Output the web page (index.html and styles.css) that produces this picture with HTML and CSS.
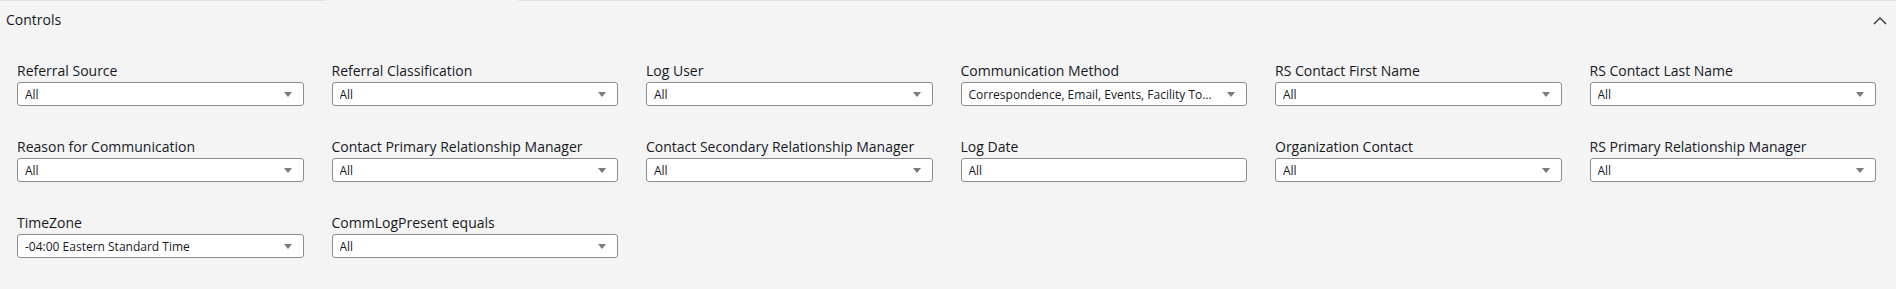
FILE: index.html
```html
<!DOCTYPE html>
<html>
<head>
<meta charset="utf-8">
<link rel="stylesheet" href="styles.css">
</head>
<body>
<div class="panel">
  <div class="topline"><span class="seg seg-a"></span><span class="seg-gap"></span><span class="seg seg-b"></span></div>
  <div class="header">
    <span class="title">Controls</span>
    <svg class="chevron" width="14" height="8" viewBox="0 0 14 8"><polyline points="1,7 7,1 13,7" fill="none" stroke="#333" stroke-width="1.4"/></svg>
  </div>
  <div class="grid">
    <div class="field"><div class="label">Referral Source</div><div class="box select"><span class="val">All</span><span class="arrow"></span></div></div>
    <div class="field"><div class="label">Referral Classification</div><div class="box select"><span class="val">All</span><span class="arrow"></span></div></div>
    <div class="field"><div class="label">Log User</div><div class="box select"><span class="val">All</span><span class="arrow"></span></div></div>
    <div class="field"><div class="label">Communication Method</div><div class="box select"><span class="val">Correspondence, Email, Events, Facility To…</span><span class="arrow"></span></div></div>
    <div class="field"><div class="label">RS Contact First Name</div><div class="box select"><span class="val">All</span><span class="arrow"></span></div></div>
    <div class="field"><div class="label">RS Contact Last Name</div><div class="box select"><span class="val">All</span><span class="arrow"></span></div></div>

    <div class="field"><div class="label">Reason for Communication</div><div class="box select"><span class="val">All</span><span class="arrow"></span></div></div>
    <div class="field"><div class="label">Contact Primary Relationship Manager</div><div class="box select"><span class="val">All</span><span class="arrow"></span></div></div>
    <div class="field"><div class="label">Contact Secondary Relationship Manager</div><div class="box select"><span class="val">All</span><span class="arrow"></span></div></div>
    <div class="field"><div class="label">Log Date</div><div class="box"><span class="val">All</span></div></div>
    <div class="field"><div class="label">Organization Contact</div><div class="box select"><span class="val">All</span><span class="arrow"></span></div></div>
    <div class="field"><div class="label">RS Primary Relationship Manager</div><div class="box select"><span class="val">All</span><span class="arrow"></span></div></div>

    <div class="field"><div class="label">TimeZone</div><div class="box select"><span class="val">-04:00 Eastern Standard Time</span><span class="arrow"></span></div></div>
    <div class="field"><div class="label">CommLogPresent equals</div><div class="box select"><span class="val">All</span><span class="arrow"></span></div></div>
  </div>
</div>
</body>
</html>
```

FILE: styles.css
```css
* { box-sizing: border-box; }
html, body { margin: 0; padding: 0; background: #f4f4f4; }
body { font-family: "Open Sans", "Liberation Sans", sans-serif; color: #232f3e; }
.panel { background: #f4f4f4; height: 289px; overflow: hidden; }
.topline { display: flex; height: 1px; }
.seg { background: #e1e1e1; height: 1px; }
.seg-a { width: 326px; }
.seg-gap { width: 192px; }
.seg-b { flex: 1; }
.header { display: flex; justify-content: space-between; align-items: flex-start; padding: 9px 9px 0 6px; height: 30px; }
.title { font-size: 14px; line-height: 20px; color: #16191f; }
.chevron { margin-top: 7px; }
.grid { display: grid; grid-template-columns: repeat(6, 1fr); column-gap: 28px; row-gap: 32px; padding: 31px 20px 0 17px; }
.field { display: flex; flex-direction: column; }
.label { font-size: 14px; line-height: 18px; margin-bottom: 2px; color: #16191f; white-space: nowrap; }
.box { height: 24px; background: #fff; border: 1px solid #8d8d8d; border-radius: 3px; display: flex; align-items: center; padding: 0 11px 0 7px; }
.val { flex: 1; font-size: 12px; color: #16191f; white-space: nowrap; overflow: hidden; }
.arrow { width: 0; height: 0; border-left: 4.5px solid transparent; border-right: 4.5px solid transparent; border-top: 5px solid #7a7a7a; }
```
